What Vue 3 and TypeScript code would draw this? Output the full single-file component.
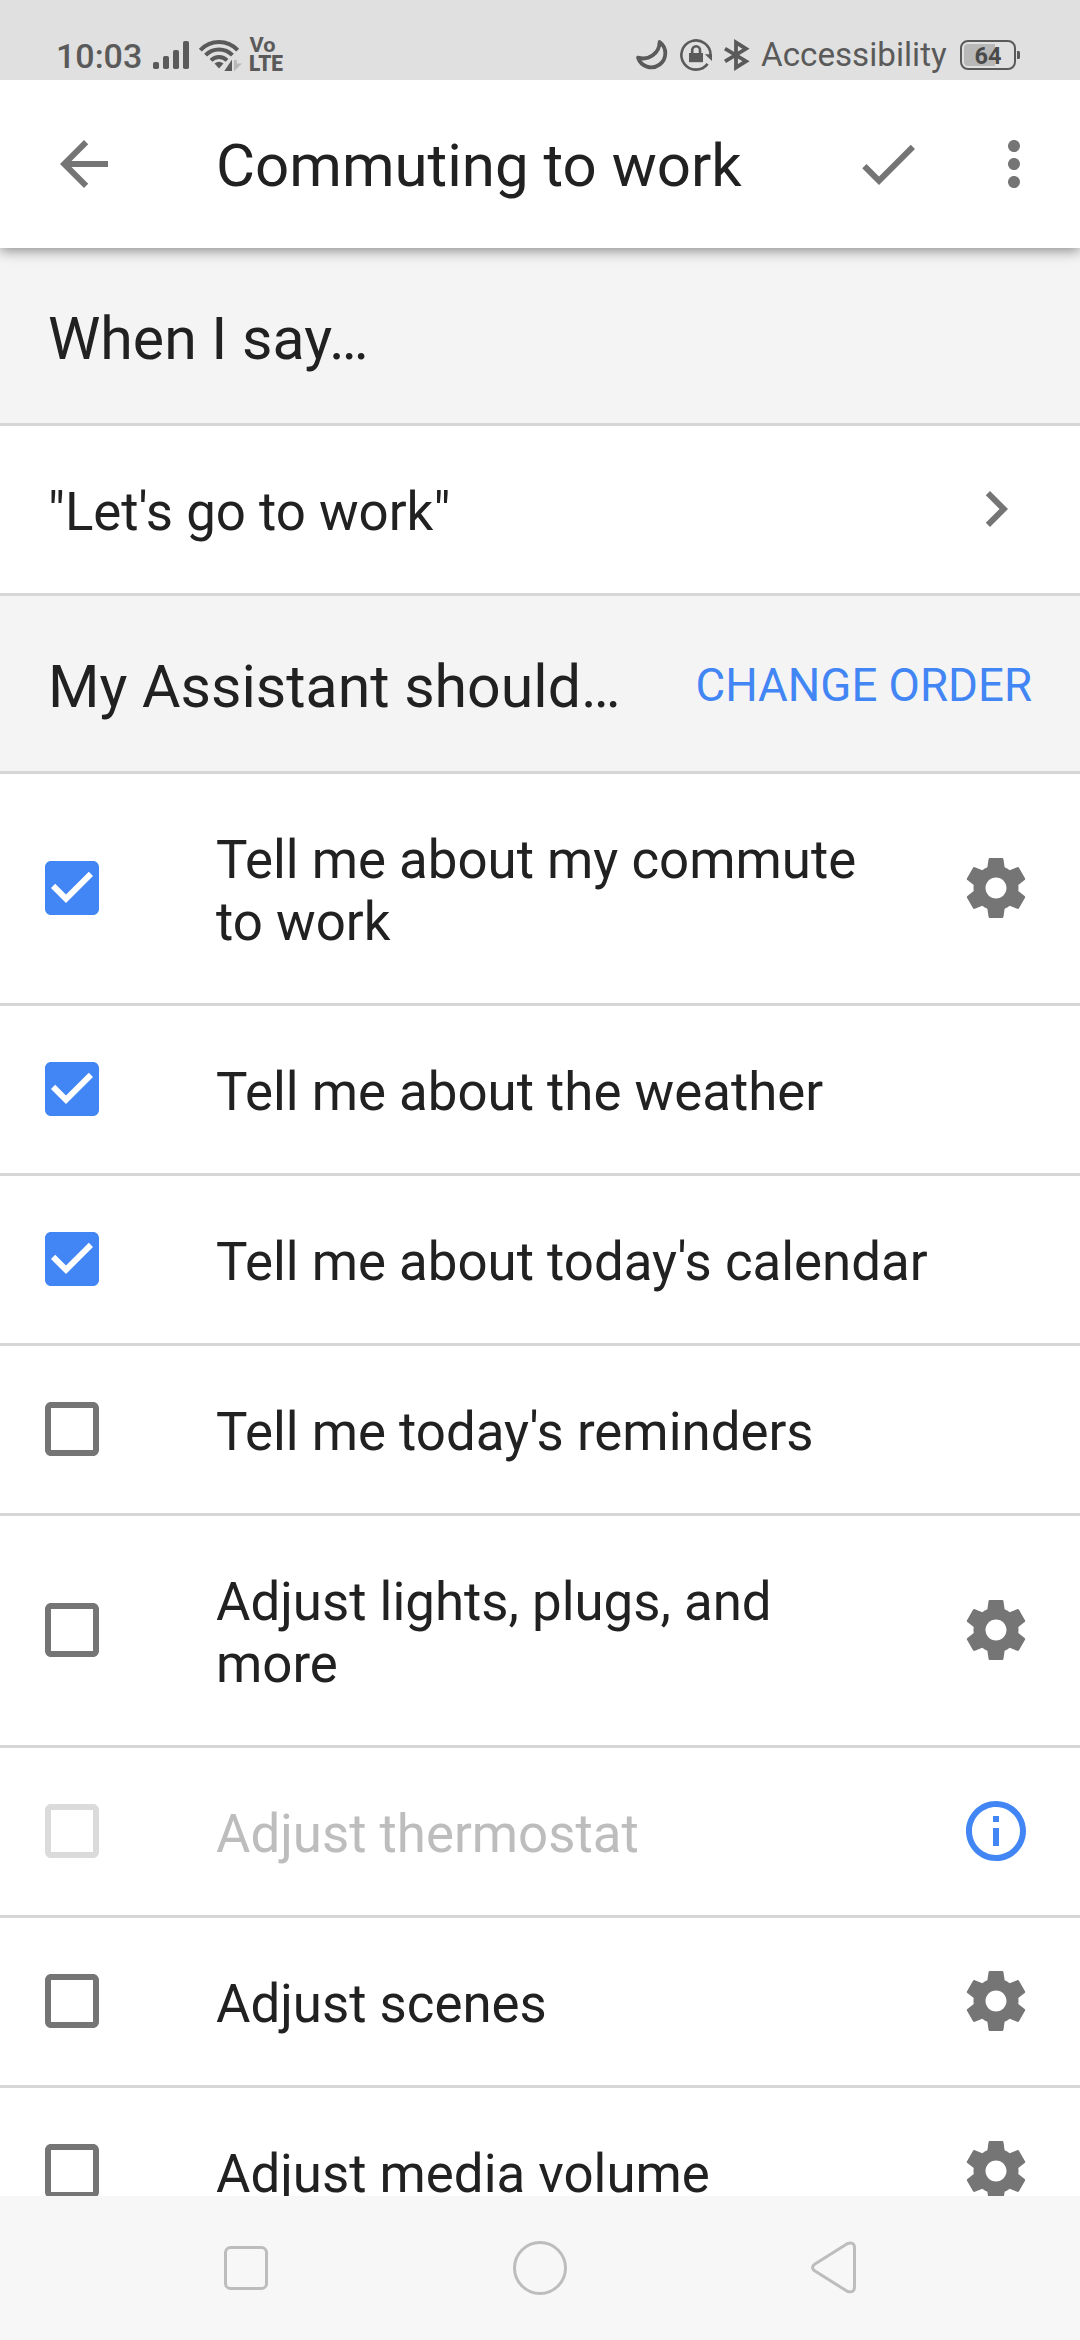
<script setup lang="ts">
interface Action {
  label: string
  checked?: boolean
  disabled?: boolean
  icon?: 'gear' | 'info'
}

const actions: Action[] = [
  { label: 'Tell me about my commute to work', checked: true, icon: 'gear' },
  { label: 'Tell me about the weather', checked: true },
  { label: "Tell me about today's calendar", checked: true },
  { label: "Tell me today's reminders" },
  { label: 'Adjust lights, plugs, and more', icon: 'gear' },
  { label: 'Adjust thermostat', disabled: true, icon: 'info' },
  { label: 'Adjust scenes', icon: 'gear' },
  { label: 'Adjust media volume', icon: 'gear' },
]
</script>

<template>
  <div class="screen">
    <div class="status">
      <span class="clock">10:03</span>
      <svg class="signal" width="38" height="40" viewBox="152 36 38 40" fill="#5a5a5a">
        <rect x="153" y="62" width="6" height="7" rx="1.8" />
        <rect x="163" y="56" width="6" height="13" rx="1.8" />
        <rect x="173" y="50" width="6" height="19" rx="1.8" />
        <rect x="183" y="41" width="6" height="28" rx="1.8" />
      </svg>
      <svg class="wifi" width="46" height="40" viewBox="198 36 46 40" fill="none" stroke="#5a5a5a" stroke-width="4">
        <path d="M200.3 50.2A25.5 25.5 0 0 1 237.7 50.2" />
        <path d="M205.6 55.2A18.5 18.5 0 0 1 232.4 55.2" />
        <path d="M211 60.3A11.4 11.4 0 0 1 227 60.3" />
        <path d="M219 68.5L214.5 63.6Q219 59.8 223.5 63.6Z" fill="#5a5a5a" stroke="none" />
        <path d="M232 59.5V71H224.4Z" fill="#5a5a5a" stroke="#e0e0e0" stroke-width="2" paint-order="stroke" />
        <path d="M234 60H236.8V63.5H242L234 71.3Z" fill="#b8b8b8" stroke="none" />
      </svg>
      <svg class="volte" width="34" height="40" viewBox="249 36 34 40" fill="#5a5a5a">
        <text x="249.6" y="52.4" font-size="20.5" font-weight="700" textLength="26" lengthAdjust="spacingAndGlyphs">Vo</text>
        <text x="249" y="71" font-size="22" font-weight="900" textLength="34" lengthAdjust="spacingAndGlyphs">LTE</text>
      </svg>
      <span class="fill"></span>
      <svg class="moon" width="34" height="40" viewBox="635 36 34 40" fill="none" stroke="#5a5a5a" stroke-width="3.8" stroke-linejoin="round">
        <path d="M659.6 42A14 14 0 1 1 638 57.6A16.5 16.5 0 0 0 659.6 42Z" />
      </svg>
      <svg class="rotation" width="34" height="40" viewBox="679 36 34 40" fill="none" stroke="#5a5a5a" stroke-width="2.6">
        <path d="M710.6 55A14.6 14.6 0 1 0 707.6 63.9" />
        <path d="M704.8 54.2H712V61Z" fill="#5a5a5a" stroke="none" />
        <rect x="689" y="53" width="14" height="9.2" fill="#5a5a5a" stroke="none" />
        <path d="M692.2 54V50.2A3.9 3.9 0 0 1 700 50.2V54" />
      </svg>
      <svg class="bluetooth" width="28" height="40" viewBox="723 36 28 40" fill="none" stroke="#5a5a5a" stroke-width="3.8">
        <path d="M725 48.6L746 61.2L736 67.6V42.4L746 48.8L725 61.4" />
      </svg>
      <span class="carrier">Accessibility</span>
      <svg class="battery" width="62" height="40" viewBox="959 36 62 40">
        <rect x="961" y="41" width="54" height="28" rx="7" fill="none" stroke="#5a5a5a" stroke-width="2" />
        <path d="M968 44H995V66H968A4 4 0 0 1 964 62V48A4 4 0 0 1 968 44Z" fill="#b8b8b8" />
        <path d="M1017 51H1018.5A1.5 1.5 0 0 1 1020 52.5V57.5A1.5 1.5 0 0 1 1018.5 59H1017Z" fill="#5a5a5a" />
        <text x="988" y="63.8" font-size="23.5" font-weight="700" text-anchor="middle" fill="#4a4a4a">64</text>
      </svg>
    </div>

    <header class="appbar">
      <svg class="icon" viewBox="0 0 24 24"><path d="M20 11H7.83l5.59-5.59L12 4l-8 8 8 8 1.41-1.41L7.83 13H20v-2z" /></svg>
      <h1>Commuting to work</h1>
      <svg class="icon done" viewBox="0 0 24 24"><path d="M9 16.17L4.83 12l-1.42 1.41L9 19 21 7l-1.41-1.41z" /></svg>
      <svg class="icon" viewBox="0 0 24 24"><path d="M12 8c1.1 0 2-.9 2-2s-.9-2-2-2-2 .9-2 2 .9 2 2 2zm0 2c-1.1 0-2 .9-2 2s.9 2 2 2 2-.9 2-2-.9-2-2-2zm0 6c-1.1 0-2 .9-2 2s.9 2 2 2 2-.9 2-2-.9-2-2-2z" /></svg>
    </header>

    <main>
      <div class="section"><h2>When I say…</h2></div>
      <div class="row phrase">
        <span class="label">"Let's go to work"</span>
        <svg class="icon" viewBox="0 0 24 24"><path d="M10 6L8.59 7.41 13.17 12l-4.58 4.59L10 18l6-6z" /></svg>
      </div>
      <div class="section">
        <h2>My Assistant should…</h2>
        <span class="order">CHANGE ORDER</span>
      </div>
      <div v-for="a in actions" :key="a.label" class="row" :class="{ disabled: a.disabled }">
        <svg class="icon box" :class="{ on: a.checked }" viewBox="0 0 24 24">
          <path v-if="a.checked" d="M19 3H5c-1.11 0-2 .9-2 2v14c0 1.1.89 2 2 2h14c1.11 0 2-.9 2-2V5c0-1.1-.89-2-2-2zm-9 14l-5-5 1.41-1.41L10 14.17l7.59-7.59L19 8l-9 9z" />
          <path v-else d="M19 5v14H5V5h14m0-2H5c-1.1 0-2 .9-2 2v14c0 1.1.9 2 2 2h14c1.1 0 2-.9 2-2V5c0-1.1-.9-2-2-2z" />
        </svg>
        <span class="label" :class="{ narrow: a.icon }">{{ a.label }}</span>
        <svg v-if="a.icon === 'gear'" class="icon" viewBox="0 0 24 24">
          <path d="M19.43 12.98c.04-.32.07-.64.07-.98s-.03-.66-.07-.98l2.11-1.65c.19-.15.24-.42.12-.64l-2-3.46c-.12-.22-.39-.3-.61-.22l-2.49 1c-.52-.4-1.08-.73-1.69-.98l-.38-2.65C14.46 2.18 14.25 2 14 2h-4c-.25 0-.46.18-.49.42l-.38 2.65c-.61.25-1.17.59-1.69.98l-2.49-1c-.23-.09-.49 0-.61.22l-2 3.46c-.13.22-.07.49.12.64l2.11 1.65c-.04.32-.07.65-.07.98s.03.66.07.98l-2.11 1.65c-.19.15-.24.42-.12.64l2 3.46c.12.22.39.3.61.22l2.49-1c.52.4 1.08.73 1.69.98l.38 2.65c.03.24.24.42.49.42h4c.25 0 .46-.18.49-.42l.38-2.65c.61-.25 1.17-.59 1.69-.98l2.49 1c.23.09.49 0 .61-.22l2-3.46c.12-.22.07-.49-.12-.64l-2.11-1.65zM12 15.5c-1.93 0-3.5-1.57-3.5-3.5s1.57-3.5 3.5-3.5 3.5 1.57 3.5 3.5-1.57 3.5-3.5 3.5z" />
        </svg>
        <svg v-else-if="a.icon === 'info'" class="icon info" viewBox="0 0 24 24">
          <path d="M11 17h2v-6h-2v6zm1-15C6.48 2 2 6.48 2 12s4.48 10 10 10 10-4.48 10-10S17.52 2 12 2zm0 18c-4.41 0-8-3.59-8-8s3.59-8 8-8 8 3.59 8 8-3.59 8-8 8zM11 9h2V7h-2v2z" />
        </svg>
      </div>
    </main>

    <nav class="navbar">
      <svg width="60" height="60" viewBox="0 0 60 60"><rect x="9.5" y="9.5" width="41" height="41" rx="5" /></svg>
      <svg width="60" height="60" viewBox="0 0 60 60"><circle cx="30" cy="30" r="25.5" /></svg>
      <svg width="60" height="60" viewBox="0 0 60 60"><path d="M10.6 26.2L43.2 5.7Q50.5 3.2 50.5 10V48.6Q50.5 55.6 43.2 53.3L10.6 32.8Q6.4 29.5 10.6 26.2Z" /></svg>
    </nav>
  </div>
</template>

<style>
body {
  margin: 0;
}
</style>

<style scoped>
.screen {
  width: 1080px;
  height: 2340px;
  display: flex;
  flex-direction: column;
  overflow: hidden;
  background: #fff;
  color: #212121;
  font-family: Roboto, sans-serif;
}
svg {
  display: block;
  flex: none;
  overflow: visible;
}
.status {
  flex: none;
  height: 80px;
  box-sizing: border-box;
  padding: 36px 59px 0 56px;
  display: flex;
  align-items: flex-start;
  background: #e0e0e0;
  color: #5a5a5a;
  line-height: 40px;
  white-space: nowrap;
}
.clock {
  width: 96px;
  font-size: 34px;
  font-weight: 500;
}
.wifi {
  margin-left: 8px;
}
.volte {
  margin-left: 5px;
}
.fill {
  flex: 1;
}
.rotation,
.bluetooth {
  margin-left: 10px;
}
.carrier {
  width: 198px;
  margin: -1px 0 0 10px;
  font-size: 33.2px;
}
.appbar {
  flex: none;
  position: relative;
  z-index: 1;
  height: 168px;
  box-sizing: border-box;
  padding: 0 30px 0 48px;
  display: flex;
  align-items: center;
  background: #fff;
  box-shadow: 0 3px 12px rgba(0, 0, 0, 0.42);
  clip-path: inset(0 0 -30px 0);
}
.appbar h1 {
  flex: 1;
  margin: 4px 0 0 96px;
  font-size: 60px;
  font-weight: 400;
  line-height: 70px;
}
.done {
  margin-right: 54px;
}
.icon {
  width: 72px;
  height: 72px;
  fill: #757575;
}
main {
  flex: 1;
  min-height: 0;
  overflow: hidden;
}
.section {
  height: 178px;
  box-sizing: border-box;
  padding: 56px 48px 0;
  display: flex;
  justify-content: space-between;
  background: #f4f4f4;
  border-bottom: 3px solid #d6d6d6;
}
.section h2 {
  margin: 0;
  font-size: 59px;
  font-weight: 400;
  line-height: 70px;
}
.order {
  margin-top: 4px;
  font-size: 45.6px;
  line-height: 60px;
  color: #4285f4;
}
.row {
  display: flex;
  align-items: center;
  padding: 0 48px 0 36px;
  border-bottom: 3px solid #d6d6d6;
}
.row > .icon {
  margin-bottom: 1px;
}
.label {
  flex: 1;
  padding: 55px 0 50px;
  font-size: 52.8px;
  line-height: 62px;
}
.box + .label {
  margin-left: 108px;
}
.label.narrow {
  margin-right: 72px;
}
.phrase {
  padding-left: 48px;
}
.icon.on,
.icon.info {
  fill: #4285f4;
}
.disabled {
  color: #bdbdbd;
}
.disabled .box {
  fill: #dbdbdb;
}
.navbar {
  flex: none;
  height: 144px;
  display: flex;
  align-items: center;
  justify-content: center;
  gap: 234px;
  background: #f7f7f7;
}
.navbar svg {
  fill: none;
  stroke: #bdbdbd;
  stroke-width: 3;
  stroke-linejoin: round;
}
</style>
